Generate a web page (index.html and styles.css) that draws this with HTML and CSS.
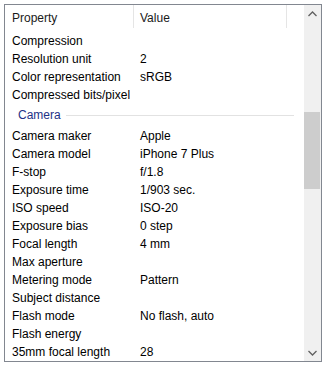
FILE: index.html
```html
<!DOCTYPE html>
<html lang="en">
<head>
<meta charset="UTF-8">
<title>Properties</title>
<link rel="stylesheet" href="styles.css">
</head>
<body>
<div class="listview">
  <div class="content">
    <div class="header">
      <div class="hcol name">Property</div>
      <div class="hcol value">Value</div>
      <div class="hcol filler"></div>
    </div>
    <div class="row"><span class="name">Compression</span><span class="value"></span></div>
    <div class="row"><span class="name">Resolution unit</span><span class="value">2</span></div>
    <div class="row"><span class="name">Color representation</span><span class="value">sRGB</span></div>
    <div class="row"><span class="name">Compressed bits/pixel</span><span class="value"></span></div>
    <div class="group"><span class="group-title">Camera</span><span class="group-line"></span></div>
    <div class="row"><span class="name">Camera maker</span><span class="value">Apple</span></div>
    <div class="row"><span class="name">Camera model</span><span class="value">iPhone 7 Plus</span></div>
    <div class="row"><span class="name">F-stop</span><span class="value">f/1.8</span></div>
    <div class="row"><span class="name">Exposure time</span><span class="value">1/903 sec.</span></div>
    <div class="row"><span class="name">ISO speed</span><span class="value">ISO-20</span></div>
    <div class="row"><span class="name">Exposure bias</span><span class="value">0 step</span></div>
    <div class="row"><span class="name">Focal length</span><span class="value">4 mm</span></div>
    <div class="row"><span class="name">Max aperture</span><span class="value"></span></div>
    <div class="row"><span class="name">Metering mode</span><span class="value">Pattern</span></div>
    <div class="row"><span class="name">Subject distance</span><span class="value"></span></div>
    <div class="row"><span class="name">Flash mode</span><span class="value">No flash, auto</span></div>
    <div class="row"><span class="name">Flash energy</span><span class="value"></span></div>
    <div class="row"><span class="name">35mm focal length</span><span class="value">28</span></div>
  </div>
  <div class="scrollbar">
    <div class="arrow">
      <svg width="9" height="6" viewBox="0 0 9 6"><path d="M0.5 5 L4.5 1 L8.5 5" fill="none" stroke="#606060" stroke-width="1.3"/></svg>
    </div>
    <div class="track">
      <div class="thumb"></div>
    </div>
    <div class="arrow">
      <svg width="9" height="6" viewBox="0 0 9 6"><path d="M0.5 1 L4.5 5 L8.5 1" fill="none" stroke="#606060" stroke-width="1.3"/></svg>
    </div>
  </div>
</div>
</body>
</html>
```

FILE: styles.css
```css
body {
  margin: 4px;
  background: #ffffff;
  font-family: 'Liberation Sans', Arial, sans-serif;
  font-size: 12px;
  color: #000;
}

.listview {
  width: 316px;
  height: 356px;
  border: 1px solid #828790;
  display: flex;
  overflow: hidden;
}

.content {
  flex: 1;
  display: flex;
  flex-direction: column;
}

.header {
  display: flex;
  height: 26px;
  flex-shrink: 0;
}

.hcol {
  display: flex;
  align-items: center;
  color: #1a1a1a;
  border-right: 1px solid #e5e5e5;
  margin-bottom: 3px;
  padding-top: 2px;
}

.hcol.name {
  width: 121px;
  padding-left: 7px;
}

.hcol.value {
  width: 146px;
  padding-left: 6px;
}

.hcol.filler {
  flex: 1;
  border-right: none;
}

.row {
  display: flex;
  height: 18px;
  padding-top: 1px;
  box-sizing: border-box;
  align-items: center;
  white-space: nowrap;
  flex-shrink: 0;
}

.row .name {
  width: 122px;
  padding-left: 7px;
}

.row .value {
  padding-left: 6px;
}

.group {
  display: flex;
  align-items: center;
  height: 23px;
  padding-left: 13px;
  padding-right: 10px;
  padding-top: 1px;
  box-sizing: border-box;
  flex-shrink: 0;
}

.group-title {
  color: #1e3287;
  margin-right: 5px;
}

.group-line {
  flex: 1;
  height: 1px;
  background: #e2e2e2;
}

.scrollbar {
  width: 17px;
  display: flex;
  flex-direction: column;
  background: #f0f0f0;
}

.arrow {
  height: 17px;
  display: flex;
  align-items: center;
  justify-content: center;
}

.track {
  flex: 1;
  padding-top: 90px;
}

.thumb {
  height: 77px;
  margin: 0 1px 0 0;
  background: #cdcdcd;
}
```
